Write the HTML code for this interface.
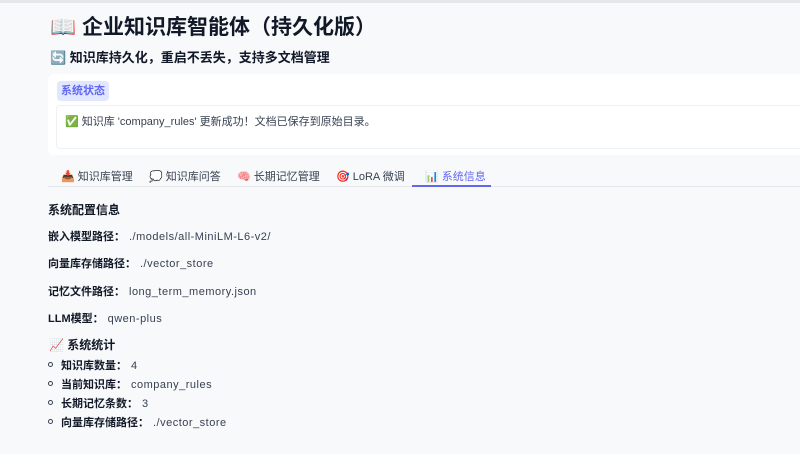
<!DOCTYPE html>
<html><head><meta charset="utf-8"><style>
*{margin:0;padding:0;box-sizing:border-box}
body{width:800px;height:454px;overflow:hidden;background:#f8f9fb;font-family:"Liberation Sans","Noto Sans CJK SC",sans-serif;color:#1f2937;position:relative}
.top{position:absolute;left:0;top:0;width:800px;height:3px;background:#e5e7eb}
.a{position:absolute;white-space:nowrap}
h1{font-size:21px;font-weight:700;color:#111827}
.sub{font-size:13px;font-weight:700;color:#111827}
.card{position:absolute;left:48px;top:74px;width:760px;height:81px;background:#fff;border-radius:6px}
.pill{position:absolute;left:57px;top:81px;height:20px;padding:0 4px;background:#e0e7ff;color:#6366f1;font-size:11px;font-weight:700;line-height:20px;border-radius:4px}
.inner{position:absolute;left:56px;top:105px;width:760px;height:44px;border:1px solid #eef0f3;border-radius:4px;background:#fff}
.t{font-size:11px;color:#374151}
.tabs{position:absolute;left:48px;top:186px;width:752px;height:1px;background:#e5e7eb}
.ul{position:absolute;left:412px;top:185px;width:79px;height:2px;background:#6366f1}
.b{font-weight:700;color:#111827}
.v{color:#374151;letter-spacing:0.5px;margin-left:4px}
.l{font-size:11px}
.dot{position:absolute;width:5px;height:5px;border:1px solid #374151;border-radius:50%}
</style></head><body>
<div class="top"></div>
<div class="a" style="left:50px;top:11px"><h1>📖 企业知识库智能体（持久化版）</h1></div>
<div class="a sub" style="left:50px;top:47px">🔄 知识库持久化，重启不丢失，支持多文档管理</div>
<div class="card"></div>
<div class="pill">系统状态</div>
<div class="inner"></div>
<div class="a t" style="left:65px;top:113px">✅ 知识库 'company_rules' 更新成功！文档已保存到原始目录。</div>
<div class="a t" style="left:61px;top:168px">📥 知识库管理</div>
<div class="a t" style="left:149px;top:168px">💭 知识库问答</div>
<div class="a t" style="left:237px;top:168px">🧠 长期记忆管理</div>
<div class="a t" style="left:336px;top:168px">🎯 LoRA 微调</div>
<div class="a t" style="left:425px;top:168px;color:#6366f1">📊 系统信息</div>
<div class="tabs"></div><div class="ul"></div>
<div class="a b" style="left:48px;top:201px;font-size:12px">系统配置信息</div>
<div class="a l" style="left:48px;top:228px"><span class="b">嵌入模型路径：</span><span class="v">./models/all-MiniLM-L6-v2/</span></div>
<div class="a l" style="left:48px;top:255px"><span class="b">向量库存储路径：</span><span class="v">./vector_store</span></div>
<div class="a l" style="left:48px;top:283px"><span class="b">记忆文件路径：</span><span class="v">long_term_memory.json</span></div>
<div class="a l" style="left:48px;top:310px"><span class="b">LLM模型：</span><span class="v">qwen-plus</span></div>
<div class="a b" style="left:49px;top:336px;font-size:12px">📈 系统统计</div>
<div class="dot" style="left:48px;top:362px"></div><div class="a l" style="left:61px;top:357px"><span class="b">知识库数量：</span><span class="v">4</span></div>
<div class="dot" style="left:48px;top:381px"></div><div class="a l" style="left:61px;top:376px"><span class="b">当前知识库：</span><span class="v">company_rules</span></div>
<div class="dot" style="left:48px;top:400px"></div><div class="a l" style="left:61px;top:395px"><span class="b">长期记忆条数：</span><span class="v">3</span></div>
<div class="dot" style="left:48px;top:419px"></div><div class="a l" style="left:61px;top:414px"><span class="b">向量库存储路径：</span><span class="v">./vector_store</span></div>
</body></html>
